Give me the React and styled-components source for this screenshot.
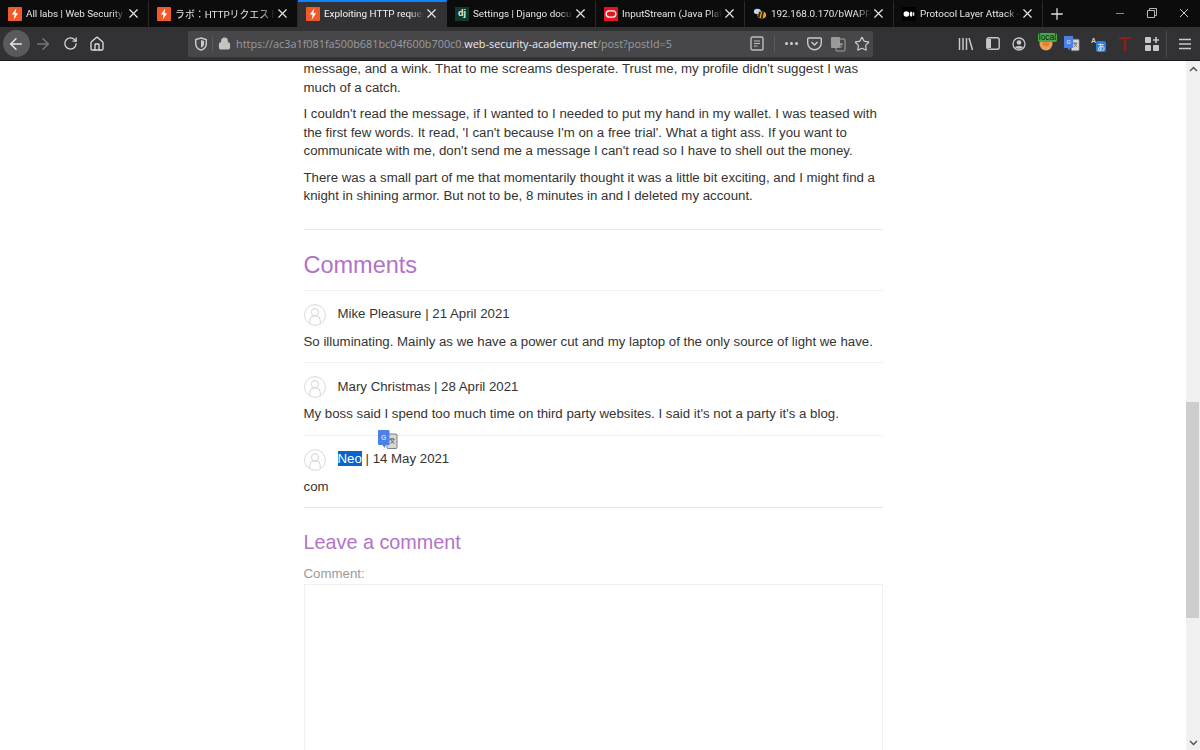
import React from 'react'
import styled, { createGlobalStyle } from 'styled-components'
import { ArrowLeft, ArrowRight, RotateCw, Home, Lock, X, Plus, Star } from 'lucide-react'

const GlobalStyle = createGlobalStyle`
    html, body {
        margin: 0;
        padding: 0;
        height: 100%;
        overflow: hidden;
    }
    body {
        font-family: "Liberation Sans", Arial, sans-serif;
    }
`

// small favicons
const BurpIcon = () => (
    <svg width="14" height="14" viewBox="0 0 16 16">
        <rect width="16" height="16" rx="1" fill="#f0592a" />
        <path d="M9.500 1.500 4.500 8.500h3l-1 6 5-7.500h-3z" fill="#fff" />
    </svg>
)

const DjangoIcon = () => (
    <DjBox>dj</DjBox>
)

const OracleIcon = () => (
    <svg width="14" height="14" viewBox="0 0 16 16">
        <rect width="16" height="16" rx="1" fill="#e3161f" />
        <rect x="2.500" y="4.500" width="11" height="7" rx="3.500" fill="none" stroke="#fff" strokeWidth="1.500" />
    </svg>
)

const BeeIcon = () => (
    <svg width="14" height="14" viewBox="0 0 16 16">
        <ellipse cx="5" cy="5" rx="4" ry="3" fill="#c4d4ee" />
        <ellipse cx="10" cy="9" rx="5" ry="4" fill="#e9a820" />
        <path d="M8 5.500 6.500 12M11.500 5.500 10 13" stroke="#2a2418" strokeWidth="2" />
    </svg>
)

const MediumIcon = () => (
    <svg width="14" height="14" viewBox="0 0 16 16">
        <rect width="16" height="16" fill="#000" />
        <circle cx="5" cy="8" r="3.200" fill="#fff" />
        <ellipse cx="10.400" cy="8" rx="1.600" ry="3" fill="#fff" />
        <ellipse cx="13.400" cy="8" rx="0.700" ry="2.700" fill="#fff" />
    </svg>
)

const tabs = [
    { title: 'All labs | Web Security', icon: <BurpIcon /> },
    { title: 'ラボ：HTTPリクエストの', icon: <BurpIcon /> },
    { title: 'Exploiting HTTP reques', icon: <BurpIcon />, active: true },
    { title: 'Settings | Django docu', icon: <DjangoIcon /> },
    { title: 'InputStream (Java Platf', icon: <OracleIcon /> },
    { title: '192.168.0.170/bWAPP/', icon: <BeeIcon /> },
    { title: 'Protocol Layer Attack -', icon: <MediumIcon /> },
]

const comments = [
    { name: 'Mike Pleasure', date: '21 April 2021', text: 'So illuminating. Mainly as we have a power cut and my laptop of the only source of light we have.' },
    { name: 'Mary Christmas', date: '28 April 2021', text: "My boss said I spend too much time on third party websites. I said it's not a party it's a blog." },
    { name: 'Neo', date: '14 May 2021', text: 'com', selected: true },
]

const Avatar = () => (
    <AvatarSvg viewBox="0 0 22 22">
        <circle cx="11" cy="11" r="10.400" fill="#fff" stroke="#d4d4d4" strokeWidth="0.900" />
        <circle cx="11" cy="8.200" r="3.600" fill="none" stroke="#d4d4d4" strokeWidth="1" />
        <path d="M5.800 19V16a4 4 0 0 1 4-4h2.400a4 4 0 0 1 4 4v3" fill="none" stroke="#d4d4d4" strokeWidth="1" />
    </AvatarSvg>
)

const TranslateIcon = ({ size = 20 }) => (
    <svg width={size} height={size} viewBox="0 0 20 20">
        <rect x="9" y="4" width="10" height="14.500" rx="1" fill="#d7d7d7" stroke="#666" strokeWidth="0.800" />
        <path d="M11.500 9h5M14 8v1M12.500 9c.6 2 2.200 3.600 4 4.500M16 9c-.6 2-2 3.600-3.500 4.500" fill="none" stroke="#555" strokeWidth="0.900" />
        <path d="M1 0h9.500a1 1 0 0 1 1 1V15H8l-1.500 3-2-3H1a1 1 0 0 1-1-1V1a1 1 0 0 1 1-1z" fill="#4a80e8" />
        <text x="5.800" y="9.500" fontSize="7" fontFamily="Liberation Sans" fontWeight="700" fill="#cfdcf8" textAnchor="middle">G</text>
    </svg>
)

const App = () => {
    return (
        <Browser>
            <GlobalStyle />
            <TabBar>
                {tabs.map((tab) => (
                    <Tab key={tab.title} $active={tab.active}>
                        <FaviconSlot>{tab.icon}</FaviconSlot>
                        <TabTitle>{tab.title}</TabTitle>
                        <X size={15} strokeWidth={1.800} color="#ececec" />
                    </Tab>
                ))}
                <NewTab>
                    <Plus size={18} strokeWidth={1.700} />
                </NewTab>
                <WindowControls>
                    <WindowButton>
                        <svg width="10" height="10" viewBox="0 0 10 10">
                            <path d="M1 5.500h8" stroke="#8d8d8d" strokeWidth="1" />
                        </svg>
                    </WindowButton>
                    <WindowButton>
                        <svg width="10" height="10" viewBox="0 0 10 10">
                            <path d="M.5 2.500h7v7h-7zM2.500 2.500v-2h7v7h-2" fill="none" stroke="#b5b5b5" strokeWidth="1" />
                        </svg>
                    </WindowButton>
                    <WindowButton>
                        <svg width="10" height="10" viewBox="0 0 10 10">
                            <path d="M1 1l8 8M9 1l-8 8" stroke="#cfcfcf" strokeWidth="1" />
                        </svg>
                    </WindowButton>
                </WindowControls>
            </TabBar>

            <Toolbar>
                <BackButton>
                    <ArrowLeft size={18} strokeWidth={2} />
                </BackButton>
                <NavButton $dim>
                    <ArrowRight size={18} strokeWidth={2} />
                </NavButton>
                <NavButton>
                    <RotateCw size={15} strokeWidth={2} />
                </NavButton>
                <NavButton>
                    <Home size={16} strokeWidth={2} />
                </NavButton>

                <UrlBar>
                    <UrlIcon>
                        <svg width="14" height="14" viewBox="0 0 16 16">
                            <path d="M8 1.200 14 3v5c0 3.500-2.600 5.800-6 7-3.400-1.200-6-3.500-6-7V3z" fill="none" stroke="#c8c8c8" strokeWidth="1.700" />
                            <path d="M8 3.500 11.500 4.600V8c0 2-1.500 3.400-3.500 4.300z" fill="#c8c8c8" />
                        </svg>
                    </UrlIcon>
                    <UrlDivider />
                    <Lock size={13} strokeWidth={2.600} color="#c4c4c4" fill="#c4c4c4" />
                    <UrlText>
                        https://ac3a1f081fa500b681bc04f600b700c0.<strong>web-security-academy.net</strong>/post?postId=5
                    </UrlText>
                    <UrlActions>
                        <svg width="14" height="15" viewBox="0 0 14 15">
                            <rect x="1" y="1" width="12" height="13" rx="1.500" fill="none" stroke="#bcbcbc" strokeWidth="1.400" />
                            <path d="M4 5h6M4 7.500h6M4 10h3.500" stroke="#bcbcbc" strokeWidth="1.200" />
                        </svg>
                        <UrlDivider $inActions />
                        <Dots>
                            <i /><i /><i />
                        </Dots>
                        <svg width="15" height="14" viewBox="0 0 15 14">
                            <path d="M1.500 1h12a.8.8 0 0 1 .8.8V6a6.800 6.800 0 0 1-13.600 0V1.800A.8.8 0 0 1 1.500 1z" fill="none" stroke="#c8c8c8" strokeWidth="1.400" />
                            <path d="M4.500 5 7.500 8l3-3" fill="none" stroke="#c8c8c8" strokeWidth="1.500" />
                        </svg>
                        <svg width="16" height="16" viewBox="0 0 16 16">
                            <rect x="6" y="3" width="9" height="12" rx="1" fill="none" stroke="#a5a5a5" />
                            <rect x="1" y="1" width="9" height="11" rx="1" fill="#9a9a9a" />
                            <path d="M9 8h4M11 7v5" stroke="#a5a5a5" />
                        </svg>
                        <Star size={16} strokeWidth={1.700} color="#cfcfcf" />
                    </UrlActions>
                </UrlBar>

                <ToolIcons>
                    <ToolSlot>
                        <svg width="16" height="14" viewBox="0 0 16 14">
                            <path d="M1.500 1v12M5 1v12M8.500 1v12M11 1l3.500 12" stroke="#c8c8c8" strokeWidth="1.500" />
                        </svg>
                    </ToolSlot>
                    <ToolSlot>
                        <svg width="14" height="13" viewBox="0 0 14 13">
                            <rect x=".8" y=".8" width="12.400" height="11.400" rx="2" fill="none" stroke="#c8c8c8" strokeWidth="1.400" />
                            <path d="M1 2h4v9H1z" fill="#c8c8c8" />
                        </svg>
                    </ToolSlot>
                    <ToolSlot>
                        <svg width="14" height="14" viewBox="0 0 14 14">
                            <circle cx="7" cy="7" r="6" fill="none" stroke="#c8c8c8" strokeWidth="1.300" />
                            <circle cx="7" cy="5.500" r="2.300" fill="#c8c8c8" />
                            <path d="M3 10.500c1-2 7-2 8 0-2 1.800-6 1.800-8 0z" fill="#c8c8c8" />
                        </svg>
                    </ToolSlot>
                    <ToolSlot>
                        <BadgedIcon>
                            <svg width="14" height="14" viewBox="0 0 14 14">
                                <circle cx="7" cy="7" r="6.500" fill="#e5a25c" />
                                <circle cx="7" cy="6" r="3.500" fill="#ef7f2b" />
                            </svg>
                            <LocalBadge>local</LocalBadge>
                        </BadgedIcon>
                    </ToolSlot>
                    <ToolSlot>
                        <TranslateIcon size={16} />
                    </ToolSlot>
                    <ToolSlot>
                        <svg width="15" height="16" viewBox="0 0 15 16">
                            <text x="0" y="7" fontSize="7" fontFamily="Liberation Sans" fontWeight="700" fill="#cfcfcf">A</text>
                            <rect x="5" y="5" width="10" height="11" rx="2" fill="#2a7de1" />
                            <text x="10" y="14" fontSize="8" fontFamily="Noto Sans CJK JP" fill="#fff" textAnchor="middle">あ</text>
                        </svg>
                    </ToolSlot>
                    <ToolSlot>
                        <svg width="12" height="14" viewBox="0 0 12 14">
                            <path d="M0 0h12v2H7.200v12H4.800V2H0z" fill="#8f1f16" />
                        </svg>
                    </ToolSlot>
                    <ToolSlot>
                        <svg width="14" height="14" viewBox="0 0 14 14">
                            <rect x="0" y="0" width="6" height="6" rx="1" fill="#c8c8c8" />
                            <rect x="0" y="8" width="6" height="6" rx="1" fill="#c8c8c8" />
                            <rect x="8" y="8" width="6" height="6" rx="1" fill="#c8c8c8" />
                            <path d="M11 0v6M8 3h6" stroke="#c8c8c8" strokeWidth="1.600" />
                        </svg>
                    </ToolSlot>
                    <ToolDivider />
                    <svg width="14" height="12" viewBox="0 0 14 12">
                        <path d="M1 1.500h12M1 6h12M1 10.500h12" stroke="#c8c8c8" strokeWidth="1.600" />
                    </svg>
                </ToolIcons>
            </Toolbar>

            <Viewport>
                <Page>
                    <Column>
                        <Paragraph>
                            message, and a wink. That to me screams desperate. Trust me, my profile didn't suggest I was<br />
                            much of a catch.
                        </Paragraph>
                        <Paragraph>
                            I couldn't read the message, if I wanted to I needed to put my hand in my wallet. I was teased with<br />
                            the first few words. It read, 'I can't because I'm on a free trial'. What a tight ass. If you want to<br />
                            communicate with me, don't send me a message I can't read so I have to shell out the money.
                        </Paragraph>
                        <Paragraph>
                            There was a small part of me that momentarily thought it was a little bit exciting, and I might find a<br />
                            knight in shining armor. But not to be, 8 minutes in and I deleted my account.
                        </Paragraph>

                        <Rule />

                        <CommentsTitle>Comments</CommentsTitle>

                        {comments.map((c) => (
                            <Comment key={c.name}>
                                <CommentHead>
                                    <Avatar />
                                    <Author>
                                        {c.selected ? <Selected>{c.name}</Selected> : c.name} | {c.date}
                                    </Author>
                                    {c.selected && (
                                        <TranslatePopup>
                                            <TranslateIcon />
                                        </TranslatePopup>
                                    )}
                                </CommentHead>
                                <CommentBody>{c.text}</CommentBody>
                            </Comment>
                        ))}

                        <Rule $dark />

                        <LeaveTitle>Leave a comment</LeaveTitle>
                        <FieldLabel>Comment:</FieldLabel>
                        <CommentBox />
                    </Column>
                </Page>

                <Scrollbar>
                    <ScrollArrow>
                        <svg width="9" height="6" viewBox="0 0 9 6">
                            <path d="M1 5l3.500-3.500L8 5" fill="none" stroke="#555" strokeWidth="1.500" />
                        </svg>
                    </ScrollArrow>
                    <ScrollTrack>
                        <ScrollThumb />
                    </ScrollTrack>
                    <ScrollArrow>
                        <svg width="9" height="6" viewBox="0 0 9 6">
                            <path d="M1 1l3.500 3.500L8 1" fill="none" stroke="#555" strokeWidth="1.500" />
                        </svg>
                    </ScrollArrow>
                </Scrollbar>
            </Viewport>
        </Browser>
    )
}

const Browser = styled.div`
    width: 1200px;
    height: 750px;
    display: flex;
    flex-direction: column;
    overflow: hidden;
    background: #fff;
`

const TabBar = styled.div`
    height: 27px;
    flex: none;
    display: flex;
    background: #0c0c0d;
    font-family: Roboto, "Noto Sans CJK JP", sans-serif;
`

const Tab = styled.div`
    width: 149px;
    height: 27px;
    flex: none;
    box-sizing: border-box;
    display: flex;
    align-items: center;
    padding: 0 7px 2px 8px;
    font-size: 9.9px;
    color: ${(p) => (p.$active ? '#f4f4f4' : '#e6e6e6')};
    background: ${(p) => (p.$active ? '#323234' : 'transparent')};
    border-top: 2px solid ${(p) => (p.$active ? '#0a84ff' : 'transparent')};
    border-right: 1px solid ${(p) => (p.$active ? 'transparent' : '#2a2a2c')};
`

const FaviconSlot = styled.div`
    width: 14px;
    height: 14px;
    flex: none;
    margin-right: 4px;
    svg {
        display: block;
    }
`

const DjBox = styled.div`
    width: 14px;
    height: 14px;
    background: #0f3a2c;
    color: #e8efe9;
    font: 700 9px/13px "Liberation Sans", sans-serif;
    text-align: center;
`

const TabTitle = styled.div`
    flex: 1;
    min-width: 0;
    white-space: nowrap;
    overflow: hidden;
    -webkit-mask-image: linear-gradient(to right, #000 86%, transparent 100%);
    mask-image: linear-gradient(to right, #000 86%, transparent 100%);
`

const NewTab = styled.div`
    width: 28px;
    flex: none;
    color: #e0e0e0;
    display: flex;
    align-items: center;
    justify-content: center;
`

const WindowControls = styled.div`
    margin-left: auto;
    display: flex;
`

const WindowButton = styled.div`
    width: 32px;
    display: flex;
    align-items: center;
    justify-content: center;
    padding-bottom: 1px;
`

const Toolbar = styled.div`
    height: 34px;
    flex: none;
    box-sizing: border-box;
    display: flex;
    align-items: center;
    padding-left: 2.5px;
    background: #323234;
    border-bottom: 1px solid #1a1a1c;
    color: #d6d6d6;
`

const NavButton = styled.div`
    width: 27px;
    height: 27px;
    flex: none;
    display: flex;
    align-items: center;
    justify-content: center;
    color: ${(p) => (p.$dim ? '#77777a' : '#dcdcdc')};
`

const BackButton = styled(NavButton)`
    background: #5a5a5d;
    border-radius: 50%;
    color: #e8e8e8;
`

const UrlBar = styled.div`
    width: 685px;
    height: 26px;
    margin-left: 77.5px;
    flex: none;
    box-sizing: border-box;
    display: flex;
    align-items: center;
    padding: 0 3px 0 6px;
    background: #47474a;
    border-radius: 2px;
`

const UrlIcon = styled.div`
    display: flex;
    width: 14px;
`

const UrlDivider = styled.div`
    width: 1px;
    height: 16px;
    background: #5a5a5d;
    margin: ${(p) => (p.$inActions ? '0 2px' : '0 5px 0 4px')};
`

const UrlText = styled.div`
    margin-left: 5px;
    font-family: "Open Sans", sans-serif;
    font-size: 10.85px;
    color: #9b9b9e;
    white-space: nowrap;

    strong {
        font-weight: 400;
        color: #ececec;
    }
`

const UrlActions = styled.div`
    margin-left: auto;
    display: flex;
    align-items: center;
    gap: 8px;
`

const Dots = styled.div`
    display: flex;
    gap: 2px;
    margin-right: 1px;

    i {
        width: 3px;
        height: 3px;
        border-radius: 50%;
        background: #cfcfcf;
    }
`

const ToolIcons = styled.div`
    flex: 1;
    display: flex;
    align-items: center;
    margin-left: 80px;

    > svg {
        margin-left: 11px;
    }
`

const ToolSlot = styled.div`
    width: 26.5px;
    flex: none;
    display: flex;
    justify-content: center;
`

const BadgedIcon = styled.div`
    position: relative;
    width: 14px;
    height: 14px;
    svg {
        display: block;
    }
`

const LocalBadge = styled.span`
    position: absolute;
    top: -4px;
    left: 0;
    transform: translateX(-1px);
    padding: 0 1px;
    height: 9px;
    background: #4aa84c;
    border-radius: 2px;
    font: 8.500px/8px "Liberation Sans", sans-serif;
    color: #10240f;
`

const ToolDivider = styled.div`
    width: 1px;
    height: 26px;
    margin-left: 1px;
    background: #4a4a4d;
`

const Viewport = styled.div`
    flex: 1;
    min-height: 0;
    display: flex;
`

const Page = styled.main`
    flex: 1;
    overflow: hidden;
    background: #fff;
`

const Column = styled.div`
    width: 579px;
    margin-left: 303.5px;
    color: #333332;
    font-size: 13.25px;
    line-height: 18.5px;
`

const Paragraph = styled.p`
    margin: 0 0 8px;
    white-space: nowrap;

    &:first-child {
        margin-top: -1px;
    }
`

const Rule = styled.hr`
    border: 0;
    height: 1px;
    margin: ${(p) => (p.$dark ? '11px 0 0' : '23px 0 0')};
    background: ${(p) => (p.$dark ? '#e6e6e6' : '#e8e8e8')};
`

const CommentsTitle = styled.h1`
    margin: 21px 0 10px;
    font-size: 23.5px;
    line-height: 29px;
    font-weight: 400;
    color: #b273c7;
`

const Comment = styled.section`
    border-top: 1px solid #f0f0f0;
    padding: 13px 0 11px;

    &:last-of-type {
        padding-bottom: 0;
    }
`

const CommentHead = styled.div`
    position: relative;
    display: flex;
    align-items: center;
    gap: 12px;
    height: 22px;
    margin-bottom: 7px;
`

const AvatarSvg = styled.svg`
    width: 22px;
    height: 22px;
    flex: none;
`

const Author = styled.span`
    white-space: nowrap;
`

const Selected = styled.span`
    background: #0a64c9;
    color: #fff;
`

const TranslatePopup = styled.div`
    position: absolute;
    left: 74px;
    top: -19px;
    width: 20px;
    height: 20px;
`

const CommentBody = styled.p`
    margin: 0;
    white-space: nowrap;
`

const LeaveTitle = styled.h2`
    margin: 21px 0 10px;
    font-size: 19.8px;
    line-height: 26px;
    font-weight: 400;
    color: #b273c7;
`

const FieldLabel = styled.label`
    display: block;
    color: #999;
    line-height: 18px;
`

const CommentBox = styled.div`
    height: 300px;
    box-sizing: border-box;
    border: 1px solid #f0f0f0;
    margin-top: 1px;
`

const Scrollbar = styled.div`
    width: 14px;
    flex: none;
    display: flex;
    flex-direction: column;
    background: #f0f0f0;
`

const ScrollArrow = styled.div`
    height: 15px;
    flex: none;
    display: flex;
    align-items: center;
    justify-content: center;
`

const ScrollTrack = styled.div`
    flex: 1;
    padding-top: 326px;
`

const ScrollThumb = styled.div`
    width: 13px;
    height: 216px;
    background: #cdcdcd;
`

export default App
